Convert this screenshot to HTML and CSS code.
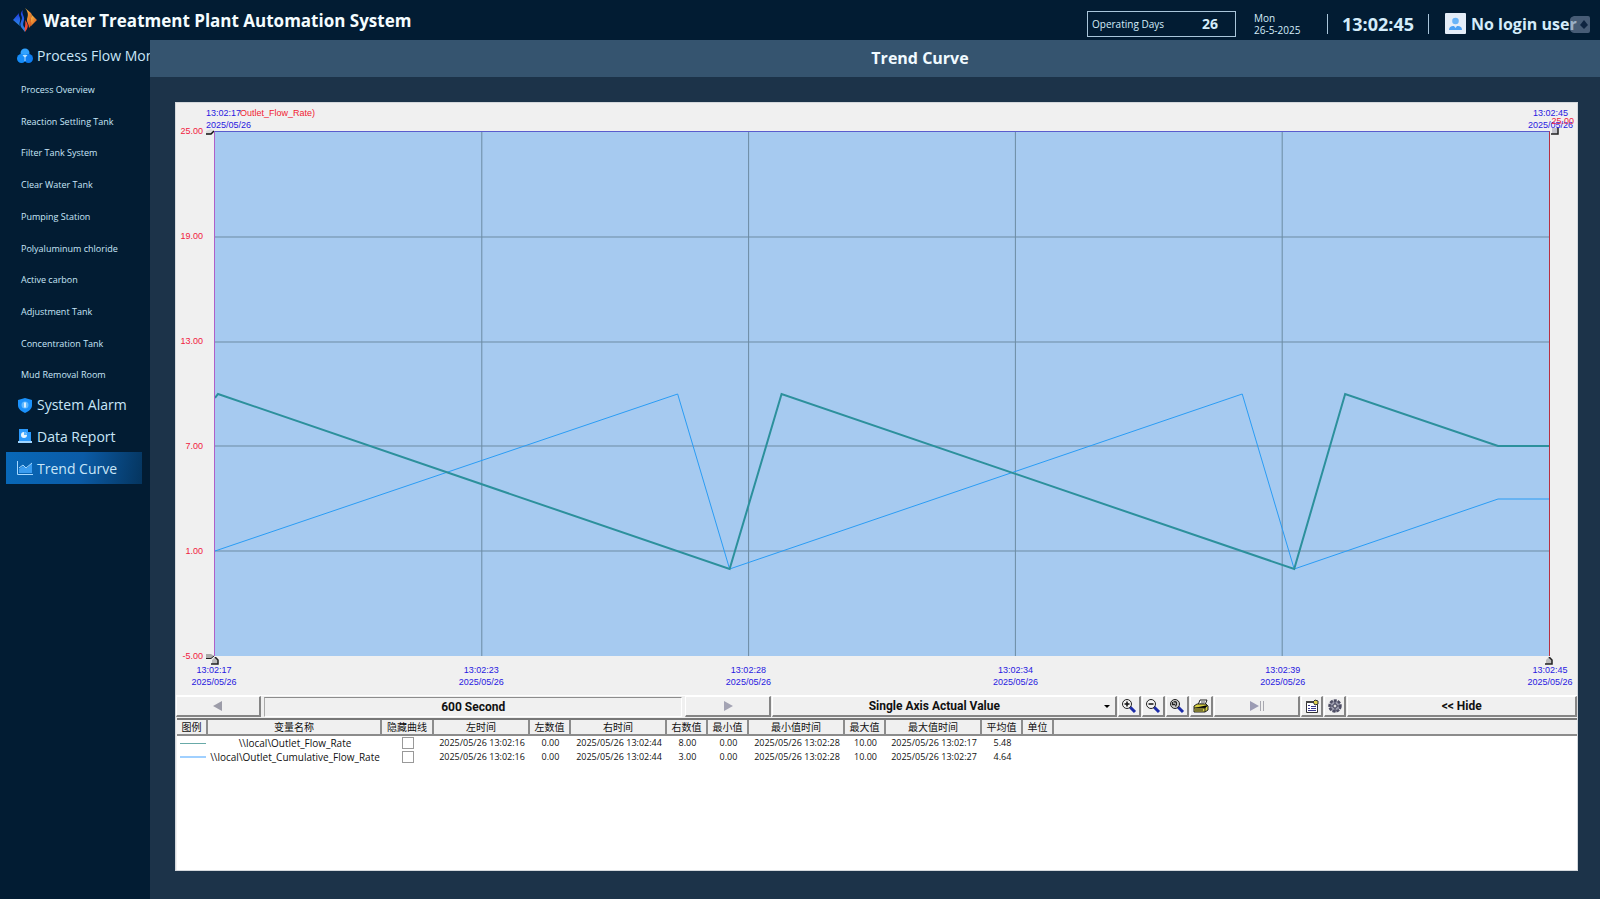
FILE: index.html
```html
<!DOCTYPE html>
<html lang="en">
<head>
<meta charset="utf-8">
<title>Water Treatment Plant Automation System</title>
<link rel="stylesheet" href="styles.css">
</head>
<body>
<header class="topbar">
  <svg class="logo" viewBox="0 0 24 24" aria-hidden="true">
    <defs>
      <linearGradient id="warm" x1="0" y1="0" x2="1" y2="1"><stop offset="0" stop-color="#ffc54a"/><stop offset="1" stop-color="#d84a18"/></linearGradient>
      <linearGradient id="cool" x1="0" y1="0" x2="0" y2="1"><stop offset="0" stop-color="#2038e0"/><stop offset="1" stop-color="#2b8fe8"/></linearGradient>
    </defs>
    <path fill="url(#cool)" d="M6 5c-1 3 2 4 1 8-.4 2-1 3 0 5L0 12z"/>
    <path fill="url(#cool)" d="M10 2c-2 4 2 6 1 10-.5 3-2 5 1 8v4l-4-5c-2-4 1-6 1-9S6 6 10 2z"/>
    <path fill="url(#warm)" d="M12 0l6 5c2 3-1 5 0 8s1 4-2 7c0-4-2-5-2-8s3-6-2-12z"/>
    <path fill="#f04a35" d="M12 12c2 3 4 5 2 9l-2 3c-1-4 1-7 0-12z"/>
    <path fill="url(#warm)" d="M18 6l6 6-6 6c1-4-1-5 0-8 .5-2 1-2 0-4z"/>
  </svg>
  <h1 class="system-title">Water Treatment Plant Automation System</h1>
  <div class="status">
    <div class="days"><span>Operating Days</span><strong>26</strong></div>
    <div class="date"><span>Mon</span><span>26-5-2025</span></div>
    <time class="clock">13:02:45</time>
    <div class="user">
      <svg class="avatar" viewBox="0 0 21 21" aria-hidden="true">
        <rect width="21" height="21" rx="1" fill="#e4edf8"/>
        <circle cx="10.500" cy="8" r="3.300" fill="#69b4f8"/>
        <path fill="#4ba1f4" d="M4 17c0-3 2-4 4-4h5c2 0 4 1 4 4z"/>
        <path fill="#d8ebff" d="M9 13h3l-1.500 2z"/>
      </svg>
      <span>No login user</span>
      <button class="user-menu" aria-label="Switch user">
        <svg viewBox="0 0 20 17"><path fill="#7688a4" d="M4 0h14q2 0 2 2v13q0 2-2 2H4q-4-1-4-4V4q0-3 4-4z"/><path fill="#172a4a" d="M14 4l4 5-4 4-4-4z"/></svg>
      </button>
    </div>
  </div>
</header>
<div class="body">
  <nav class="sidebar">
    <a class="group" href="#">
      <svg viewBox="0 0 16 16"><circle cx="8" cy="5" r="4.500" fill="#32a2ff"/><circle cx="4.500" cy="10.500" r="4.500" fill="#168cf8"/><circle cx="11.500" cy="10.500" r="4.500" fill="#0e7cf0"/><path fill="#b8e2ff" d="M5.500 7h5L8.500 9.500V13h-1V9.500z"/></svg>
      <span>Process Flow Monitoring</span></a>
    <a class="sub" href="#">Process Overview</a>
    <a class="sub" href="#">Reaction Settling Tank</a>
    <a class="sub" href="#">Filter Tank System</a>
    <a class="sub" href="#">Clear Water Tank</a>
    <a class="sub" href="#">Pumping Station</a>
    <a class="sub" href="#">Polyaluminum chloride</a>
    <a class="sub" href="#">Active carbon</a>
    <a class="sub" href="#">Adjustment Tank</a>
    <a class="sub" href="#">Concentration Tank</a>
    <a class="sub" href="#">Mud Removal Room</a>
    <a class="group" href="#">
      <svg viewBox="0 0 16 16"><path fill="#1b91fb" d="M8 1l7 2v5c0 4-3 6-7 8-4-2-7-4-7-8V3z"/><circle cx="8" cy="8" r="3.500" fill="#62baff"/><path stroke="#fff" stroke-width="1.500" d="M8 5.500v5"/></svg>
      <span>System Alarm</span></a>
    <a class="group" href="#">
      <svg viewBox="0 0 16 16"><path fill="#2b99fb" d="M2 1h9v3h3v9H2z"/><path fill="#9fd4ff" d="M1 13h14v2H1z"/><circle cx="7" cy="7" r="3" fill="#e8f6ff"/><path fill="#59b4ff" d="M7 7V4a3 3 0 0 1 3 3z"/></svg>
      <span>Data Report</span></a>
    <a class="group active" href="#" aria-current="page">
      <svg viewBox="0 0 16 16"><path fill="#3a9cf0" d="M2 13V9l4-3 4 2 5-5v10z"/><path fill="none" stroke="#a5d8ff" d="M.500 1v13.500H16M2 8l4-3 3 3 6-5"/></svg>
      <span>Trend Curve</span></a>
  </nav>
  <main class="main">
    <h2 class="page-title">Trend Curve</h2>
    <section class="panel">
      <div class="chart">
        <div class="y-axis"><span>25.00</span><span>19.00</span><span>13.00</span><span>7.00</span><span>1.00</span><span>-5.00</span></div>
        <div class="plot">
          <svg class="curves" viewBox="0 0 1335 524" preserveAspectRatio="none" role="img" aria-label="Outlet flow rate trend">
            <path class="grid" d="M267 0V524M534 0V524M801 0V524M1068 0V524M0 105H1335M0 210H1335M0 314H1335M0 419H1335"/>
            <path class="blue" d="M0 419L463 262L515 437L1028 262L1080 437L1284 367H1335"/>
            <path class="green" d="M0 266L3 262L515 437L567 262L1080 437L1131 262L1284 314H1335"/>
          </svg>
          <div class="corner start"><span>13:02:17</span><span>2025/05/26</span></div>
          <div class="series-name">Outlet_Flow_Rate)</div>
          <div class="corner end"><span>13:02:45</span><span>2025/05/26</span></div>
          <div class="right-value">25.00</div>
          <svg class="handle top-left" viewBox="0 0 8 8"><path fill="#ddd" d="M0 3l5-2 3 2-2 3H0z"/><path stroke="#111" stroke-width="1.500" d="M0 6h5l3-3" fill="none"/></svg>
          <svg class="handle top-right" viewBox="0 0 8 8"><path fill="#c4c4cc" d="M1 1h6v6H1z"/><path stroke="#222" stroke-width="1.500" d="M0 7h7V1" fill="none"/></svg>
          <svg class="handle low-left" viewBox="0 0 8 8"><path fill="#aaa" d="M0 2h5l3 2-3 3H0z"/><path stroke="#222" d="M0 6.500h5l3-2.500" fill="none"/></svg>
          <svg class="handle bottom-left" viewBox="0 0 8 8"><path fill="#bbb" d="M1 7V3l3-3 3 3v4z"/><path stroke="#222" stroke-width="1.500" d="M0 7h7V3L4 0" fill="none"/></svg>
          <svg class="handle bottom-right" viewBox="0 0 8 8"><path fill="#bbb" d="M1 7V3l3-3 3 3v4z"/><path stroke="#222" stroke-width="1.500" d="M0 7h7V3L4 0" fill="none"/></svg>
        </div>
        <div class="x-axis">
          <div><span>13:02:17</span><span>2025/05/26</span></div>
          <div><span>13:02:23</span><span>2025/05/26</span></div>
          <div><span>13:02:28</span><span>2025/05/26</span></div>
          <div><span>13:02:34</span><span>2025/05/26</span></div>
          <div><span>13:02:39</span><span>2025/05/26</span></div>
          <div><span>13:02:45</span><span>2025/05/26</span></div>
        </div>
      </div>
      <div class="toolbar">
        <button class="tool" aria-label="Back"><svg viewBox="0 0 16 16"><path fill="#9c9ca8" d="M12 3v10L3 8z"/></svg></button>
        <output class="span-field">600 Second</output>
        <button class="tool" aria-label="Forward"><svg viewBox="0 0 16 16"><path fill="#a4a4b4" d="M4 3v10l9-5z"/></svg></button>
        <div class="mode">
          <select aria-label="Axis mode"><option>Single Axis Actual Value</option></select>
          <svg viewBox="0 0 6 3"><path d="M0 0h6L3 3z"/></svg>
        </div>
        <button class="tool" aria-label="Zoom in"><svg viewBox="0 0 16 16"><path stroke="#1c2ca8" stroke-width="3" d="M9 9l5 5"/><circle cx="6" cy="6" r="4.500" fill="#f4f4f4" stroke="#222"/><path stroke="#111" stroke-width="1.500" d="M3.500 6h5M6 3.500v5"/></svg></button>
        <button class="tool" aria-label="Zoom out"><svg viewBox="0 0 16 16"><path stroke="#1c2ca8" stroke-width="3" d="M9 9l5 5"/><circle cx="6" cy="6" r="4.500" fill="#f4f4f4" stroke="#222"/><path stroke="#111" stroke-width="1.500" d="M3.500 6h5"/></svg></button>
        <button class="tool" aria-label="Reset zoom"><svg viewBox="0 0 16 16"><path stroke="#1c2ca8" stroke-width="3" d="M9 9l5 5"/><circle cx="6" cy="6" r="4.500" fill="#ccc" stroke="#222"/><path fill="none" stroke="#222" stroke-width="1.300" d="M3.500 4v2.500H6M4.500 4c3-1 4 1 2 4.500"/></svg></button>
        <button class="tool" aria-label="Print"><svg viewBox="0 0 16 16"><path fill="#fff" stroke="#222" d="M5 7l2-5h7l-2 5z"/><path stroke="#555" d="M8 4h4M7 6h4"/><path fill="#d8d040" stroke="#222" d="M1 8l3-2h9l2 2v4l-3 2H1z"/><path stroke="#222" d="M1 10h11l3-3M12 10v4M2 12h8"/></svg></button>
        <button class="tool" aria-label="Pause or resume"><svg viewBox="0 0 16 16"><path fill="#9c9cb4" d="M1 3v10l9-5z"/><path stroke="#a8a8b0" d="M11.500 3v10M14.500 3v10"/></svg></button>
        <button class="tool" aria-label="Properties"><svg viewBox="0 0 16 16"><path fill="#fff" stroke="#333" d="M2.500 3.500h11v11h-11z"/><path fill="#444" d="M2 3h8v2H2z"/><path fill="#dfd14e" stroke="#333" d="M9 4l2-2 3 1v3l-3 1z"/><path stroke="#36368c" d="M4 7.500h2M7 8.500h5M4 10.500h2M7 10.500h5M4 12.500h8"/></svg></button>
        <button class="tool" aria-label="Settings"><svg viewBox="0 0 16 16"><circle cx="8" cy="8" r="5.500" fill="#9a9aac" stroke="#505066" stroke-width="2.500" stroke-dasharray="3 1"/><circle cx="8" cy="8" r="2" fill="#ddd" stroke="#44445c"/><path stroke="#44445c" d="M8 2v4M8 10v4M2 8h4M10 8h4"/></svg></button>
        <button class="tool">&lt;&lt; Hide</button>
      </div>
      <div class="records">
        <table>
          <colgroup><col class="c-key"><col class="c-name"><col class="c-hide"><col class="c-time"><col class="c-num"><col class="c-time"><col class="c-num"><col class="c-num"><col class="c-time"><col class="c-num"><col class="c-time"><col class="c-num"><col class="c-unit"><col></colgroup>
          <thead><tr><th>图例</th><th>变量名称</th><th>隐藏曲线</th><th>左时间</th><th>左数值</th><th>右时间</th><th>右数值</th><th>最小值</th><th>最小值时间</th><th>最大值</th><th>最大值时间</th><th>平均值</th><th>单位</th><th></th></tr></thead>
          <tbody>
            <tr><td><i class="key teal"></i></td><td class="name">\\local\Outlet_Flow_Rate</td><td><input type="checkbox" aria-label="Hide Outlet_Flow_Rate"></td><td>2025/05/26 13:02:16</td><td>0.00</td><td>2025/05/26 13:02:44</td><td>8.00</td><td>0.00</td><td>2025/05/26 13:02:28</td><td>10.00</td><td>2025/05/26 13:02:17</td><td>5.48</td><td></td><td></td></tr>
            <tr><td><i class="key sky"></i></td><td class="name">\\local\Outlet_Cumulative_Flow_Rate</td><td><input type="checkbox" aria-label="Hide Outlet_Cumulative_Flow_Rate"></td><td>2025/05/26 13:02:16</td><td>0.00</td><td>2025/05/26 13:02:44</td><td>3.00</td><td>0.00</td><td>2025/05/26 13:02:28</td><td>10.00</td><td>2025/05/26 13:02:27</td><td>4.64</td><td></td><td></td></tr>
          </tbody>
        </table>
      </div>
    </section>
  </main>
</div>
</body>
</html>
```
FILE: styles.css
```css
* { box-sizing: border-box; }
body {
  margin: 0;
  min-height: 100vh;
  display: flex;
  flex-direction: column;
  background: #021c33;
  color: #d4ecfa;
  font-family: "Open Sans", "Noto Sans", "Noto Sans CJK SC", sans-serif;
}
button, select { font: inherit; color: inherit; }

.topbar {
  display: flex;
  align-items: center;
  height: 40px;
  padding-left: 13px;
  padding-right: 10px;
}
.logo { width: 24px; height: 24px; flex: none; }
.system-title {
  margin: 0 0 0 6px;
  padding-top: 2px;
  color: #f4fcff;
  font-size: 17px;
  font-weight: 700;
  line-height: 24px;
  white-space: nowrap;
}
.status { display: flex; align-items: center; margin-left: auto; padding-top: 7px; white-space: nowrap; }
.days {
  display: flex;
  align-items: center;
  justify-content: space-between;
  width: 149px;
  height: 26px;
  padding: 0 17px 0 4px;
  border: 1px solid #a9c5da;
  font-size: 10px;
}
.days strong { font-size: 14px; }
.date { display: flex; flex-direction: column; width: 73px; margin-left: 18px; font-size: 10px; line-height: 12px; }
.clock {
  width: 102px;
  border: solid #a9c5da;
  border-width: 0 1px;
  text-align: center;
  font-size: 18px;
  font-weight: 700;
  line-height: 20px;
}
.user { position: relative; display: flex; align-items: center; gap: 5px; width: 161px; padding-left: 16px; font-size: 16px; font-weight: 700; line-height: 22px; }
.avatar { width: 21px; height: 21px; flex: none; }
.user-menu { position: absolute; right: 0; top: 3px; width: 20px; height: 17px; padding: 0; border: 0; background: none; opacity: .6; }
.user-menu svg { display: block; }

.body { flex: 1; display: flex; }
.sidebar {
  display: grid;
  grid-template-columns: minmax(0, 1fr);
  grid-auto-rows: 1fr;
  flex: none;
  width: 150px;
  height: 444px;
  overflow: hidden;
}
.sidebar a { display: flex; align-items: center; color: #c8e6f8; text-decoration: none; white-space: nowrap; }
.group { gap: 4px; margin: 0 8px 0 6px; padding-left: 11px; font-size: 14px; }
.group svg { width: 16px; height: 16px; flex: none; }
.sidebar .sub { padding-top: 4px; padding-left: 21px; font-size: 9px; }
.active { background: linear-gradient(100deg, #0868b8, #0b5ba6 55%, #05355f); }

.main { flex: 1; display: flex; flex-direction: column; min-width: 0; background: #1c3349; }
.page-title {
  margin: 0;
  padding: 6px 0 7px 90px;
  background: #35546f;
  color: #f0faff;
  text-align: center;
  font-size: 16px;
  font-weight: 700;
  line-height: 24px;
}
.panel {
  flex: 1;
  display: flex;
  flex-direction: column;
  margin: 25px 22px 28px 25px;
  border: 1px solid #d4d8dc;
  background: #f0f0f0;
  color: #111;
}

.chart {
  flex: 1;
  display: grid;
  grid-template: 1fr 39px / 38px 1fr;
  padding: 28px 27px 0 0;
  font-family: "Liberation Sans", sans-serif;
  font-size: 9px;
  line-height: 12px;
}
.y-axis { display: flex; flex-direction: column; justify-content: space-between; padding-right: 11px; color: #f02040; text-align: right; }
.y-axis span { height: 0; line-height: 0; }
.plot {
  position: relative;
  border: solid;
  border-width: 1px 1px 0;
  border-color: #5a5ccc #b83040 #a6caf0 #b060c8;
  background: #a6caf0;
}
.curves { position: absolute; width: 100%; height: 100%; }
.curves path { fill: none; vector-effect: non-scaling-stroke; }
.curves .grid { stroke: #6c8ba3; stroke-width: 1; }
.curves .blue { stroke: #2a9cf4; stroke-width: 1; }
.curves .green { stroke: #2c909c; stroke-width: 2; }
.corner { position: absolute; top: -25px; display: flex; flex-direction: column; color: #2818e0; }
.start { left: -9px; }
.end { right: -24px; align-items: center; }
.series-name { position: absolute; top: -25px; left: 25px; color: #f02030; }
.right-value { position: absolute; top: -17px; right: -25px; color: #f02040; }
.handle { position: absolute; width: 8px; height: 8px; }
.top-left { left: -9px; top: -4px; }
.top-right { right: -10px; top: -5px; }
.low-left { left: -9px; bottom: -4px; }
.bottom-left { left: -4px; bottom: -9px; }
.bottom-right { right: -4px; bottom: -9px; }
.x-axis { grid-column: 2; display: flex; justify-content: space-between; padding-top: 8px; color: #2818e0; }
.x-axis div { display: flex; flex-direction: column; align-items: center; width: 0; }

.toolbar {
  display: grid;
  grid-template-columns: 85fr 421fr 86fr 344fr repeat(4, 23px) 86fr 22px 22px 229fr;
  gap: 1px;
  height: 20px;
  border-top: 1px solid #fff;
  font-family: Roboto, sans-serif;
  font-size: 12px;
  font-weight: 700;
}
.tool, .mode {
  display: flex;
  align-items: center;
  justify-content: center;
  padding: 0;
  border: solid;
  border-width: 1px 2px 2px 1px;
  border-color: #fff #858585 #858585 #fff;
  background: #f0f0f0;
}
.tool svg { width: 16px; height: 16px; }
.span-field { margin: 1px 2px 0; border: 1px solid; border-color: #8c8c8c #fff #fff #aaa; text-align: center; line-height: 18px; }
.mode { position: relative; }
.mode select { width: 100%; padding: 0 20px 0 0; border: 0; background: none; appearance: none; text-align-last: center; }
.mode svg { position: absolute; right: 5px; width: 6px; height: 3px; pointer-events: none; }

.records { height: 152px; margin: 3px 0 0 1px; border-top: 2px solid #777; background: #fff; }
table { width: 100%; table-layout: fixed; border-collapse: separate; border-spacing: 0; font-size: 9px; line-height: 12px; }
th {
  height: 16px;
  padding: 1px 0 0;
  border: solid;
  border-width: 0 2px 2px 0;
  border-color: #8c8c8c;
  background: #f0f0f0;
  font-family: "Liberation Sans", "Noto Sans CJK SC", sans-serif;
  font-size: 10px;
  font-weight: 400;
  line-height: 13px;
  white-space: nowrap;
}
th:last-child { border-right: 0; }
td { height: 14px; padding: 0; text-align: center; white-space: nowrap; }
.name { font-size: 10px; }
.c-key { width: 31px; }
.c-name { width: 174px; }
.c-hide { width: 52px; }
.c-time { width: 96px; }
.c-num { width: 41px; }
.c-unit { width: 31px; }
.key { display: block; width: 26px; margin: 0 auto; }
.teal { height: 1px; background: #68aaa8; }
.sky { height: 2px; background: #a0d0ff; }
td input { display: block; width: 12px; height: 12px; margin: 0 auto; border: 1px solid #999; background: #fff; appearance: none; }
```
